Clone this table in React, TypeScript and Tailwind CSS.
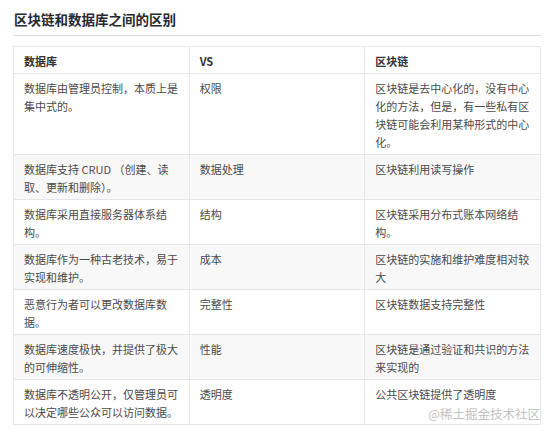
import React from 'react';

interface Row {
  db: string;
  vs: string;
  chain: string;
}

const rows: Row[] = [
  { db: '数据库由管理员控制，本质上是集中式的。', vs: '权限', chain: '区块链是去中心化的，没有中心化的方法，但是，有一些私有区块链可能会利用某种形式的中心化。' },
  { db: '数据库支持 CRUD （创建、读取、更新和删除）。', vs: '数据处理', chain: '区块链利用读写操作' },
  { db: '数据库采用直接服务器体系结构。', vs: '结构', chain: '区块链采用分布式账本网络结构。' },
  { db: '数据库作为一种古老技术，易于实现和维护。', vs: '成本', chain: '区块链的实施和维护难度相对较大' },
  { db: '恶意行为者可以更改数据库数据。', vs: '完整性', chain: '区块链数据支持完整性' },
  { db: '数据库速度极快，并提供了极大的可伸缩性。', vs: '性能', chain: '区块链是通过验证和共识的方法来实现的' },
  { db: '数据库不透明公开，仅管理员可以决定哪些公众可以访问数据。', vs: '透明度', chain: '公共区块链提供了透明度' },
];

const cell = 'border border-[#e4e6ea] px-[10px] pt-[5px] pb-[3px] align-top text-left';

export default function App() {
  return (
    <div
      className="w-[554px] h-[432px] bg-white px-[13px] overflow-hidden"
      style={{ fontFamily: '"Noto Sans CJK SC", "Noto Sans", sans-serif' }}
    >
      <h2 className="mt-[9px] pb-[6px] pl-[1px] text-[13.5px] leading-[20px] font-bold text-[#252933] border-b border-[#dcdcdc]">
        区块链和数据库之间的区别
      </h2>

      <div className="relative mt-[10px]">
        <table className="w-[528px] table-fixed border-collapse text-[11px] leading-[18px] text-[#4a4a4a]">
          <thead>
            <tr className="bg-white">
              <th className={`${cell} font-bold text-[#333]`}>数据库</th>
              <th className={`${cell} font-bold text-[#333]`}>VS</th>
              <th className={`${cell} font-bold text-[#333]`}>区块链</th>
            </tr>
          </thead>
          <tbody>
            {rows.map((r, i) => (
              <tr key={r.vs} className={i % 2 === 1 ? 'bg-[#f8f8f9]' : 'bg-white'}>
                <td className={cell}>{r.db}</td>
                <td className={cell}>{r.vs}</td>
                <td className={cell}>{r.chain}</td>
              </tr>
            ))}
          </tbody>
        </table>

        {/* watermark */}
        <span className="absolute right-[1px] bottom-[2px] text-[12.5px] leading-[18px] text-[#c2c2c2] pointer-events-none">
          @稀土掘金技术社区
        </span>
      </div>
    </div>
  );
}
